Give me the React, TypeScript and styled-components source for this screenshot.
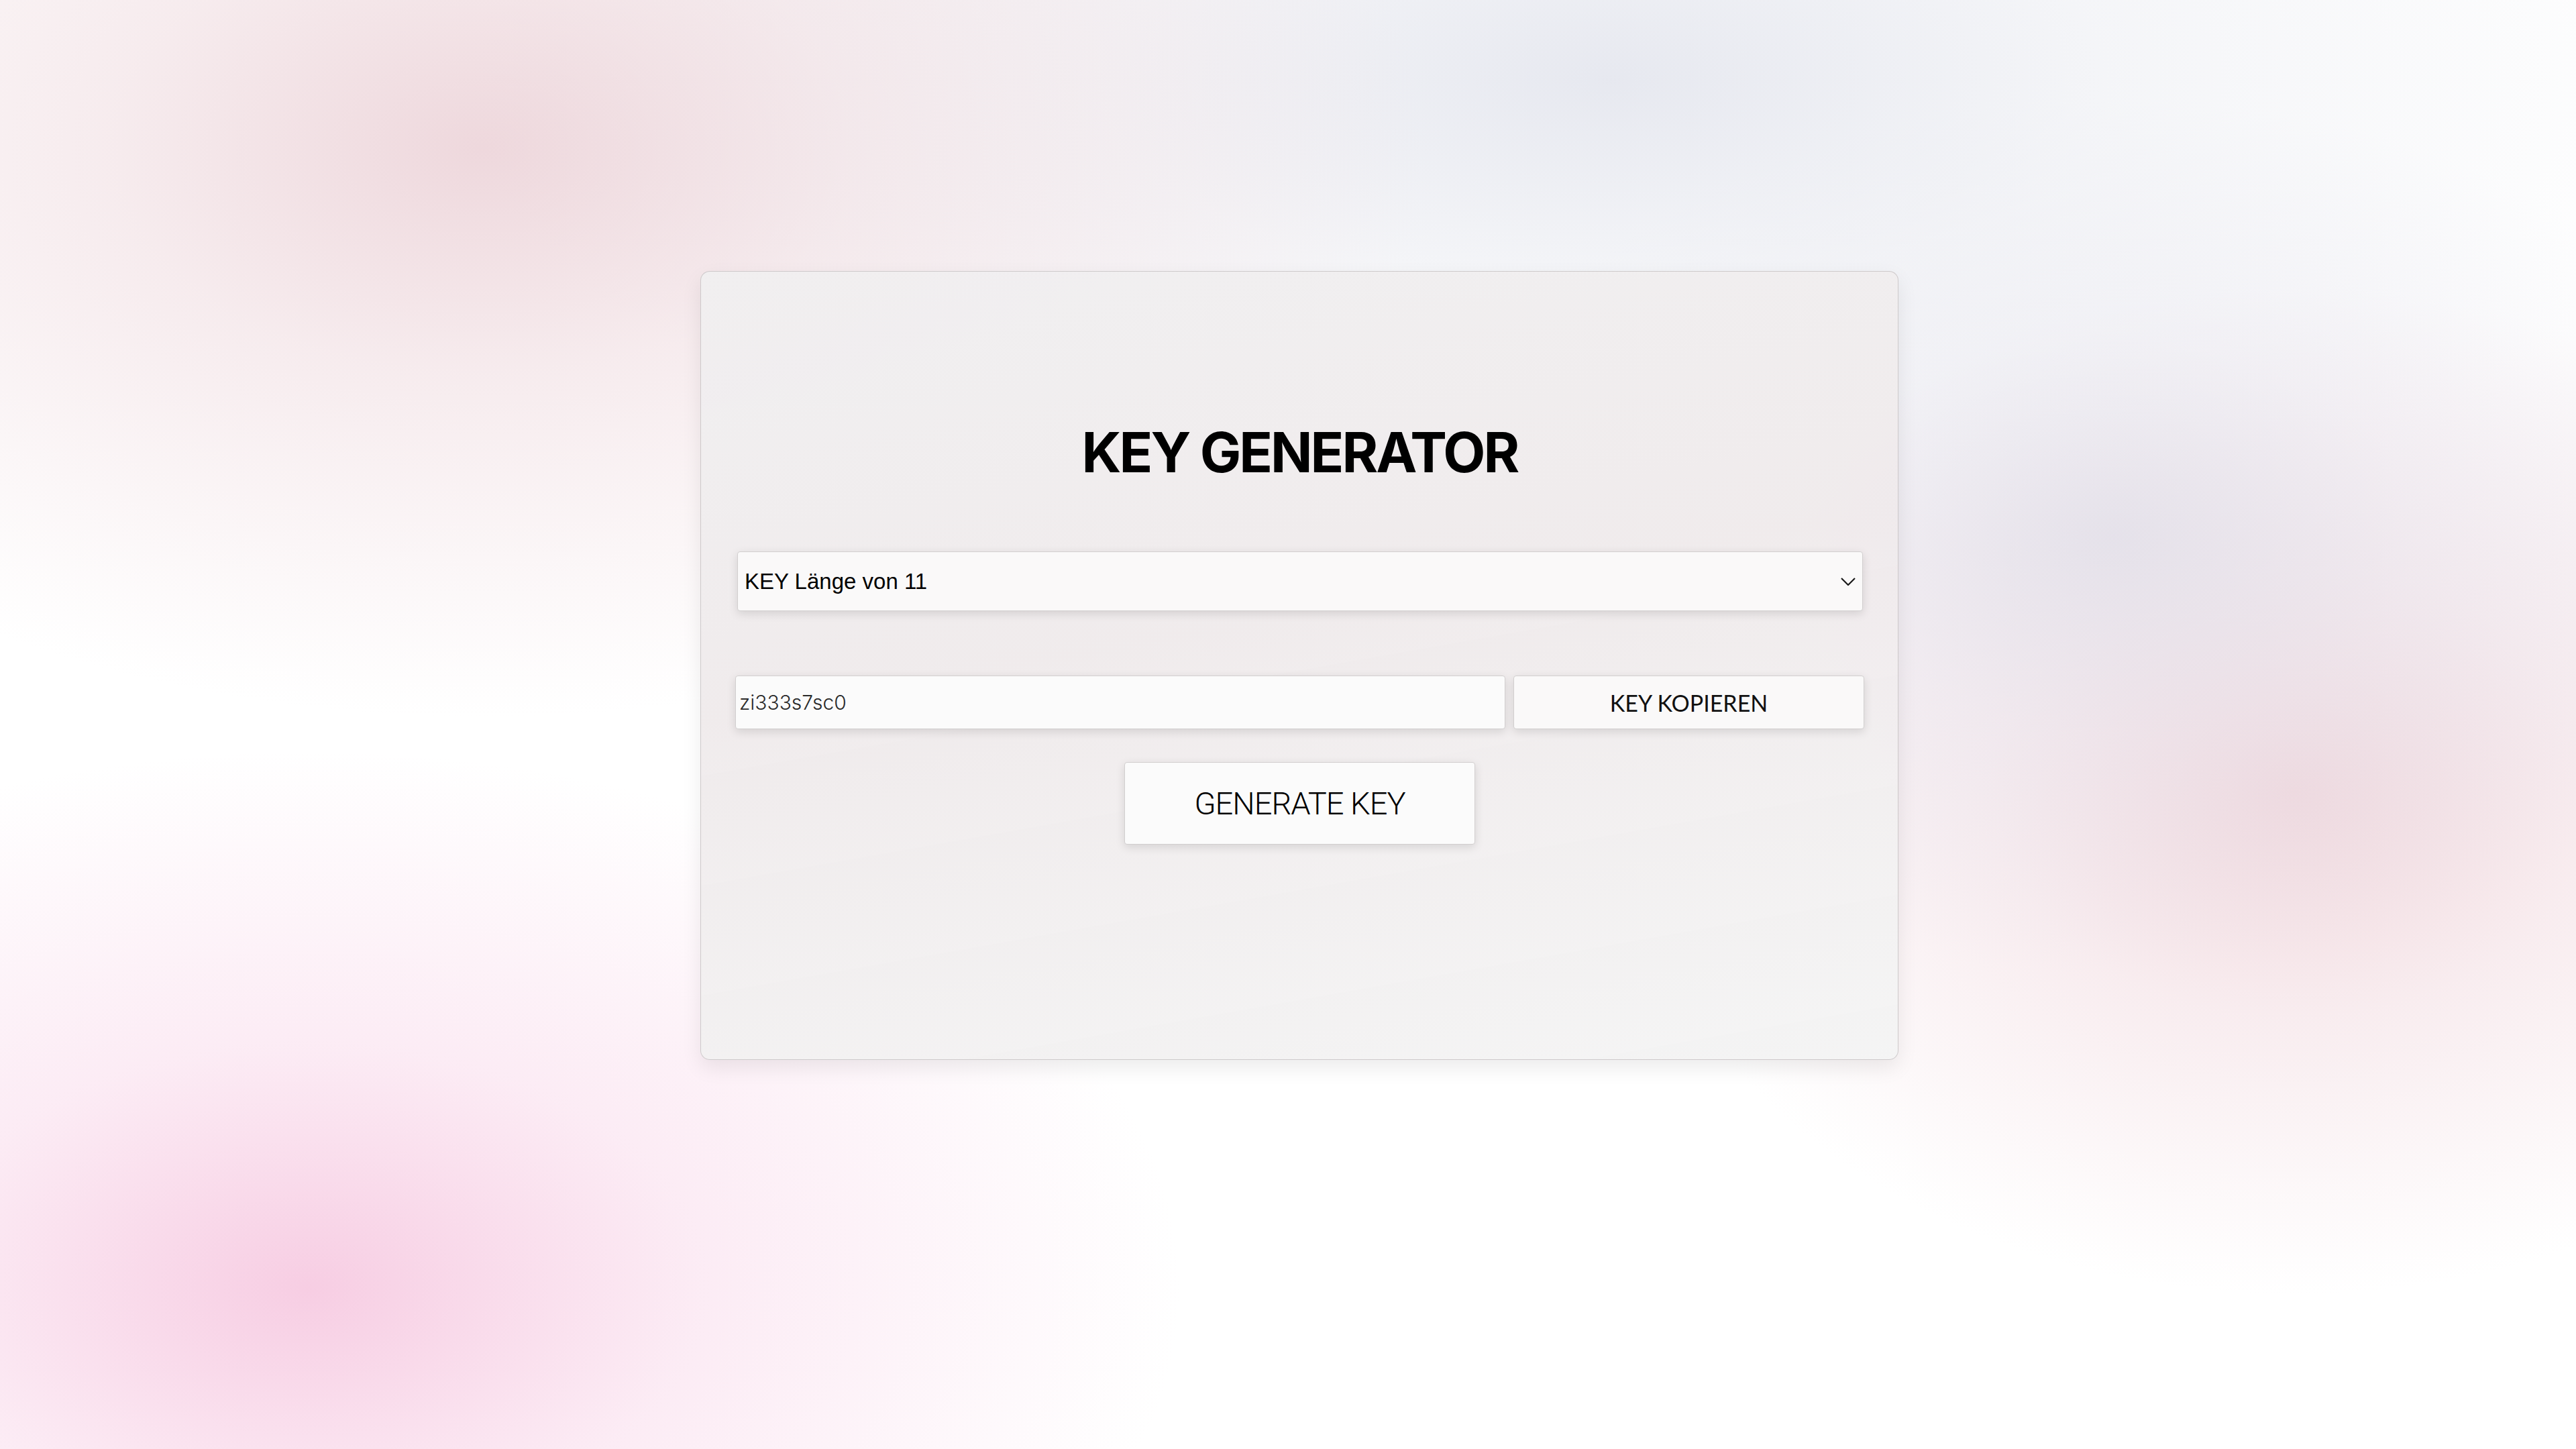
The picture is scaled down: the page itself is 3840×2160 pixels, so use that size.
import { useState } from "react";
import styled, { createGlobalStyle } from "styled-components";

const GlobalStyle = createGlobalStyle`
  html, body {
    margin: 0;
    padding: 0;
  }
  body {
    min-height: 2160px;
    font-family: "Inter", "Liberation Sans", sans-serif;
    background:
      radial-gradient(ellipse 1400px 850px at 720px 220px, rgba(234, 206, 212, 0.8) 0%, rgba(236, 212, 217, 0.45) 40%, rgba(240, 220, 224, 0) 100%),
      radial-gradient(ellipse 1700px 700px at 2400px 120px, rgba(228, 230, 238, 0.9) 0%, rgba(232, 234, 240, 0.45) 45%, rgba(236, 238, 244, 0) 100%),
      radial-gradient(ellipse 1000px 650px at 3150px 800px, rgba(224, 222, 232, 0.8) 0%, rgba(228, 226, 236, 0.4) 45%, rgba(232, 230, 238, 0) 100%),
      radial-gradient(ellipse 1000px 750px at 3420px 1180px, rgba(238, 208, 214, 0.85) 0%, rgba(240, 214, 220, 0.45) 45%, rgba(242, 220, 224, 0) 100%),
      radial-gradient(ellipse 1300px 800px at 460px 1920px, rgba(246, 200, 224, 0.9) 0%, rgba(248, 212, 232, 0.45) 45%, rgba(250, 224, 238, 0) 100%),
      #ffffff;
  }
`;

const Page = styled.div`
  box-sizing: border-box;
  min-height: 2160px;
  display: flex;
  justify-content: center;
  align-items: flex-start;
  padding: 404px 0 0 34px;
`;

const Card = styled.div`
  box-sizing: border-box;
  width: 1786px;
  height: 1176px;
  display: flex;
  flex-direction: column;
  padding: 229px 50px 0 51px;
  border: 1px solid rgba(200, 195, 196, 0.85);
  border-radius: 14px;
  background: linear-gradient(
    170deg,
    rgba(240, 239, 240, 0.94) 0%,
    rgba(239, 234, 235, 0.94) 45%,
    rgba(244, 244, 244, 0.96) 100%
  );
  box-shadow: 0 12px 30px rgba(0, 0, 0, 0.08);
`;

const Title = styled.h1`
  margin: 0;
  text-align: center;
  font-family: "Inter", sans-serif;
  font-weight: 700;
  font-size: 82px;
  line-height: 1;
  letter-spacing: -3px;
  color: #000;
`;

const SelectWrap = styled.div`
  position: relative;
  height: 89px;
  margin: 106px 2px 0 3px;
`;

const Field = `
  box-sizing: border-box;
  border: 1px solid #d2cfcf;
  border-radius: 4px;
  background: #faf9f9;
  box-shadow: 0 4px 14px rgba(0, 0, 0, 0.12);
  outline: none;
`;

const LengthSelect = styled.select`
  ${Field}
  width: 100%;
  height: 100%;
  appearance: none;
  padding: 0 0 0 10px;
  font-family: "Liberation Sans", Arial, sans-serif;
  font-size: 33px;
  color: #000;
`;

const Chevron = styled.svg`
  position: absolute;
  right: 11px;
  top: 50%;
  transform: translateY(-50%);
  pointer-events: none;
`;

const Row = styled.div`
  display: flex;
  gap: 12px;
  height: 80px;
  margin-top: 96px;
`;

const KeyInput = styled.input`
  ${Field}
  flex: 1;
  min-width: 0;
  height: 100%;
  padding: 0 5px;
  background: #fbfbfb;
  font-family: "Inter", sans-serif;
  font-weight: 300;
  font-size: 30px;
  color: #2a2a2a;
`;

const CopyButton = styled.button`
  ${Field}
  width: 523px;
  height: 100%;
  cursor: pointer;
  font-family: "Lato", sans-serif;
  font-weight: 400;
  font-size: 34px;
  color: #111;
`;

const GenerateButton = styled.button`
  ${Field}
  align-self: center;
  width: 523px;
  height: 123px;
  margin-top: 49px;
  background: #fbfbfb;
  cursor: pointer;
  font-family: "Roboto", sans-serif;
  font-weight: 300;
  font-size: 47px;
  letter-spacing: -1px;
  color: #000;
`;

const chars = "abcdefghijklmnopqrstuvwxyz0123456789";

const makeKey = (len: number) => {
  let out = "";
  for (let i = 0; i < len; i++) {
    out += chars[Math.floor(Math.random() * chars.length)];
  }
  return out;
};

const App = () => {
  const [length, setLength] = useState<number>(11);
  const [key, setKey] = useState<string>("zi333s7sc0");

  return (
    <>
      <GlobalStyle />
      <Page>
        <Card>
          <Title>KEY GENERATOR</Title>
          <SelectWrap>
            <LengthSelect
              value={length}
              onChange={(e) => setLength(Number(e.target.value))}
            >
              {[8, 9, 10, 11, 12, 16, 20].map((n) => (
                <option key={n} value={n}>
                  KEY Länge von {n}
                </option>
              ))}
            </LengthSelect>
            <Chevron width="22" height="12" viewBox="0 0 22 12">
              <polyline
                points="1,1 11,11 21,1"
                fill="none"
                stroke="#1a1a1a"
                strokeWidth="2.2"
              />
            </Chevron>
          </SelectWrap>
          <Row>
            <KeyInput type="text" value={key} readOnly />
            <CopyButton onClick={() => navigator.clipboard?.writeText(key)}>
              KEY KOPIEREN
            </CopyButton>
          </Row>
          <GenerateButton onClick={() => setKey(makeKey(length))}>
            GENERATE KEY
          </GenerateButton>
        </Card>
      </Page>
    </>
  );
};

export default App;
